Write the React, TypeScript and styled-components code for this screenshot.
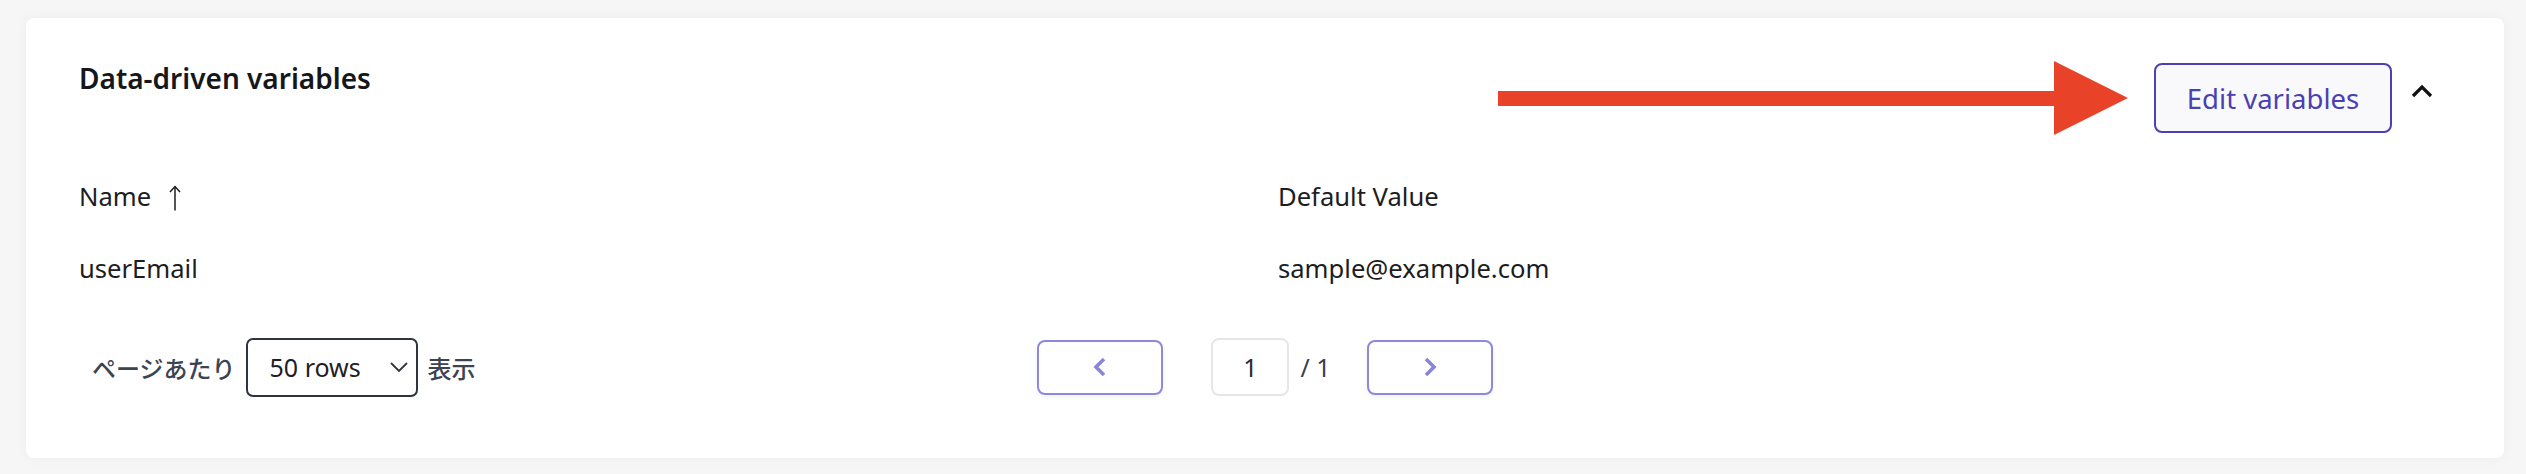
import React from "react";
import styled, { createGlobalStyle } from "styled-components";

const GlobalStyle = createGlobalStyle`
  html, body {
    margin: 0;
    padding: 0;
    background: #f6f6f6;
  }
  body {
    font-family: "Noto Sans", "Noto Sans CJK JP", sans-serif;
    color: #1c1d21;
  }
  * { box-sizing: border-box; }
`;

const Page = styled.div`
  padding: 18px 22px 16px 26px;
`;

const Card = styled.section`
  position: relative;
  height: 440px;
  background: #ffffff;
  border-radius: 8px;
  box-shadow: 0 0 14px rgba(0, 0, 0, 0.045);
  padding: 41px 53px 0 53px;
  display: flex;
  flex-direction: column;
`;

const Header = styled.div`
  display: flex;
  justify-content: space-between;
  align-items: flex-start;
`;

const Title = styled.h2`
  margin: 0;
  font-size: 28px;
  line-height: 38px;
  font-weight: 600;
  color: #16171b;
`;

const Actions = styled.div`
  display: flex;
  align-items: center;
  gap: 12px;
  margin-top: 4px;
  margin-right: 11px;
`;

const EditButton = styled.button`
  width: 238px;
  height: 70px;
  border: 2px solid #4c40b2;
  border-radius: 8px;
  background: #f9f9fb;
  color: #4a3fb3;
  font-family: inherit;
  font-size: 27.5px;
  font-weight: 400;
  cursor: pointer;
  padding: 0;
`;

const IconButton = styled.button`
  width: 36px;
  height: 36px;
  display: flex;
  align-items: center;
  justify-content: center;
  border: none;
  background: transparent;
  padding: 0;
  margin-bottom: 14px;
  cursor: pointer;
`;

const Table = styled.div`
  margin-top: 28px;
  display: grid;
  grid-template-columns: 1199px 1fr;
`;

const Cell = styled.div`
  padding: 17px 0;
  font-size: 25.6px;
  line-height: 38.4px;
  color: #1c1d21;
  display: flex;
  align-items: center;
`;

const SortIcon = styled.svg`
  margin-left: 18px;
  margin-top: 2px;
`;

const Footer = styled.div`
  margin-top: 32px;
  padding: 0 13px;
  display: grid;
  grid-template-columns: 1fr auto 1fr;
  align-items: center;
`;

const PerPage = styled.div`
  display: flex;
  align-items: center;
`;

const JpLabel = styled.span<{ $gap?: number }>`
  font-family: "Noto Sans CJK JP", "Noto Sans", sans-serif;
  font-size: 24px;
  font-weight: 500;
  color: #3c4353;
  margin-left: ${(p) => p.$gap ?? 0}px;
`;

const SelectBox = styled.div`
  margin-left: 10px;
  width: 172px;
  height: 59px;
  border: 2px solid #2f3441;
  border-radius: 7px;
  display: flex;
  align-items: center;
  justify-content: space-between;
  padding: 0 8px 0 22px;
  font-size: 25px;
  color: #1f2026;
  background: #fff;
`;

const Pager = styled.div`
  display: flex;
  align-items: center;
`;

const PageButton = styled.button<{ $gapLeft?: number }>`
  width: 126px;
  height: 55px;
  border: 2px solid #8d89da;
  border-radius: 8px;
  background: #ffffff;
  box-shadow: 0 2px 5px rgba(0, 0, 0, 0.06);
  display: flex;
  align-items: center;
  justify-content: center;
  margin-left: ${(p) => p.$gapLeft ?? 0}px;
  padding: 0;
  cursor: pointer;
`;

const PageInput = styled.div`
  margin-left: 48px;
  width: 78px;
  height: 58px;
  border: 2px solid #e6e6e6;
  border-radius: 8px;
  display: flex;
  align-items: center;
  justify-content: center;
  font-size: 25px;
  color: #2a2d35;
`;

const PageTotal = styled.span`
  margin-left: 11px;
  font-size: 25px;
  color: #3a3f4b;
`;

const Annotation = styled.svg`
  position: absolute;
  left: 1472px;
  top: 43px;
  pointer-events: none;
`;

export default function App() {
  return (
    <>
      <GlobalStyle />
      <Page>
        <Card>
          <Header>
            <Title>Data-driven variables</Title>
            <Actions>
              <EditButton>Edit variables</EditButton>
              <IconButton aria-label="collapse">
                <svg width="22" height="14" viewBox="0 0 22 14">
                  <polyline
                    points="2,12 11,3 20,12"
                    fill="none"
                    stroke="#111"
                    strokeWidth="3.2"
                  />
                </svg>
              </IconButton>
            </Actions>
          </Header>

          <Table>
            <Cell>
              Name
              <SortIcon width="12" height="26" viewBox="0 0 12 26">
                <line x1="6" y1="1.5" x2="6" y2="25.5" stroke="#1c1d21" strokeWidth="1.5" />
                <polyline points="1,7 6,1.5 11,7" fill="none" stroke="#1c1d21" strokeWidth="1.5" />
              </SortIcon>
            </Cell>
            <Cell>Default Value</Cell>
            <Cell>userEmail</Cell>
            <Cell>sample@example.com</Cell>
          </Table>

          <Footer>
            <PerPage>
              <JpLabel>ページあたり</JpLabel>
              <SelectBox>
                <span>50 rows</span>
                <svg width="18" height="10" viewBox="0 0 18 10">
                  <polyline points="1,1 9,9 17,1" fill="none" stroke="#2f3441" strokeWidth="1.8" />
                </svg>
              </SelectBox>
              <JpLabel $gap={10}>表示</JpLabel>
            </PerPage>

            <Pager>
              <PageButton aria-label="previous">
                <svg width="14" height="20" viewBox="0 0 14 20">
                  <polyline points="11,2 3,10 11,18" fill="none" stroke="#8a86d6" strokeWidth="3.6" />
                </svg>
              </PageButton>
              <PageInput>1</PageInput>
              <PageTotal>/ 1</PageTotal>
              <PageButton $gapLeft={36} aria-label="next">
                <svg width="14" height="20" viewBox="0 0 14 20">
                  <polyline points="3,2 11,10 3,18" fill="none" stroke="#8a86d6" strokeWidth="3.6" />
                </svg>
              </PageButton>
            </Pager>
            <div />
          </Footer>

          <Annotation width="630" height="74" viewBox="0 0 630 74">
            <rect x="0" y="30" width="557" height="15" fill="#e84328" />
            <polygon points="556,0 630,37 556,74" fill="#e84328" />
          </Annotation>
        </Card>
      </Page>
    </>
  );
}
